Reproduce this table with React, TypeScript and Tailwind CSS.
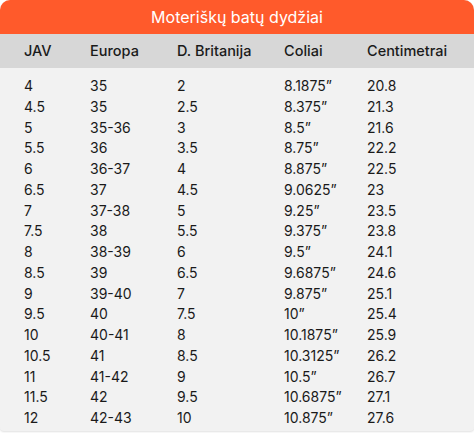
const rows: string[][] = [
  ["4", "35", "2", "8.1875”", "20.8"],
  ["4.5", "35", "2.5", "8.375”", "21.3"],
  ["5", "35-36", "3", "8.5”", "21.6"],
  ["5.5", "36", "3.5", "8.75”", "22.2"],
  ["6", "36-37", "4", "8.875”", "22.5"],
  ["6.5", "37", "4.5", "9.0625”", "23"],
  ["7", "37-38", "5", "9.25”", "23.5"],
  ["7.5", "38", "5.5", "9.375”", "23.8"],
  ["8", "38-39", "6", "9.5”", "24.1"],
  ["8.5", "39", "6.5", "9.6875”", "24.6"],
  ["9", "39-40", "7", "9.875”", "25.1"],
  ["9.5", "40", "7.5", "10”", "25.4"],
  ["10", "40-41", "8", "10.1875”", "25.9"],
  ["10.5", "41", "8.5", "10.3125”", "26.2"],
  ["11", "41-42", "9", "10.5”", "26.7"],
  ["11.5", "42", "9.5", "10.6875”", "27.1"],
  ["12", "42-43", "10", "10.875”", "27.6"],
];

const headers = ["JAV", "Europa", "D. Britanija", "Coliai", "Centimetrai"];
const cols = "grid grid-cols-[66px_87px_107px_83px_1fr] pl-6";

export default function App() {
  return (
    <div className="w-[474px] h-[433px] bg-white font-['Inter',sans-serif] text-[#1a1a1a]">
      <div className="w-[474px] h-[431px] rounded-t-[10px] rounded-b-[4px] overflow-hidden bg-[#f2f2f2] shadow-[0_1px_2px_rgba(0,0,0,0.12)]">
        <div className="h-[34px] bg-[#ff5a2b] flex items-center justify-center text-white text-[16px]">
          Moteriškų batų dydžiai
        </div>
        <div className={`${cols} h-[34px] items-center bg-[#d7d7d7] text-[14.5px] font-medium`}>
          {headers.map((h) => (
            <span key={h}>{h}</span>
          ))}
        </div>
        <div className="pt-[7px]">
          {rows.map((r, i) => (
            <div key={i} className={`${cols} h-[20.75px] items-center text-[14px]`}>
              {r.map((c, j) => (
                <span key={j}>{c}</span>
              ))}
            </div>
          ))}
        </div>
      </div>
    </div>
  );
}
